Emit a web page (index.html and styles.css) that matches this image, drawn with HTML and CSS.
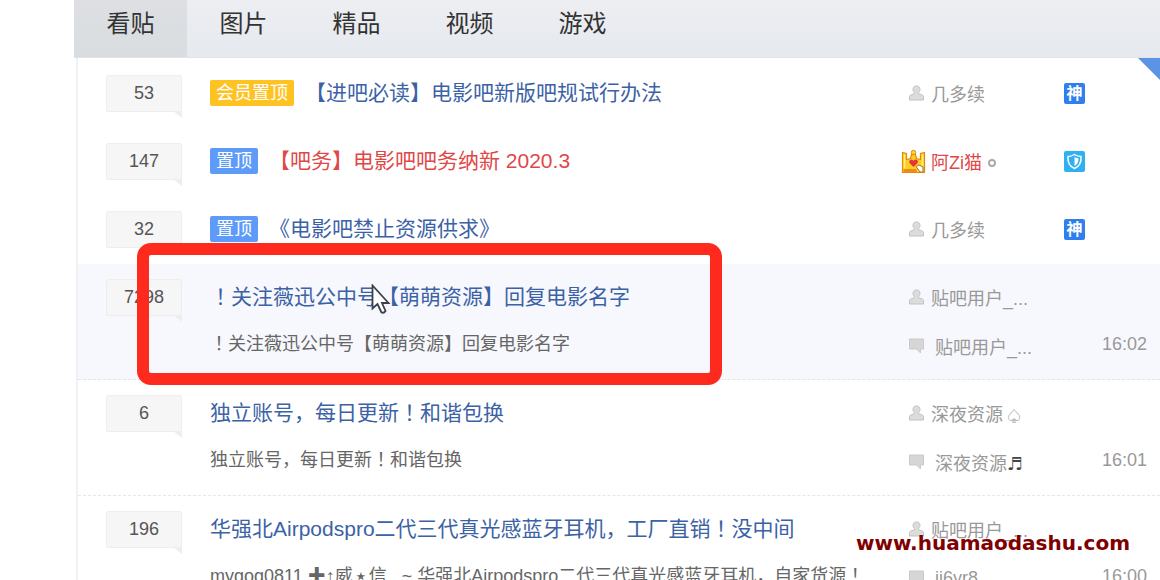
FILE: index.html
```html
<!DOCTYPE html>
<html lang="zh-CN">
<head>
    <meta charset="UTF-8">
    <meta name="viewport" content="width=device-width, initial-scale=1.0">
    <title>电影吧</title>
    <link rel="stylesheet" href="styles.css">
</head>
<body>

    <!-- 图标 -->
    <svg class="sprite" aria-hidden="true">
        <symbol id="icon-user" viewBox="0 0 15 16">
            <path d="M7.500 .8a3.600 3.600 0 0 1 2.200 6.400v1.600l3.900 1.400q.9.400.9 1.300v3.500H.5v-3.500q0-.9.9-1.300l3.900-1.400V7.200A3.600 3.600 0 0 1 7.500.8z" fill="#dcdcdc" stroke="#c2c2c2"/>
        </symbol>
        <symbol id="icon-reply" viewBox="0 0 15 16">
            <path d="M.5 1h14v10h-3v4l-4-4h-7z" fill="#d6d6d6" stroke="#cacaca"/>
        </symbol>
        <symbol id="icon-crown" viewBox="0 0 25 25">
            <path d="M1.500 3.500l4 1v6l4-1 1-4h4l1 4 4 1v-6l4-1v20h-22z" fill="#ffcf1f" stroke="#e08a10" stroke-width="1.200"/>
            <path d="M3.500 5.500v14M21.500 5.500v12" stroke="#fff08a" stroke-width="1.500"/>
            <circle cx="12.500" cy="3.500" r="2.200" fill="#ffd83a" stroke="#e08a10"/>
            <path d="M2.500 21.500h13" stroke="#f08a18" stroke-width="3"/>
            <path d="M12.500 18l-4-4q-1-3 2-3.500 1.500 0 2 1.500 1-2 3-1.300 2.200 1 1 3.300z" fill="#e2353c"/>
            <path d="M15 17.500l3-1.500 4 2v5h-3z" fill="#fff" stroke="#b0702c"/>
        </symbol>
        <symbol id="icon-shield" viewBox="0 0 21 21">
            <rect width="21" height="21" rx="2" fill="#2fb0f2"/>
            <path d="M10.500 3.500q3 2 6.500 2 .8 9-6.500 12-7.300-3-6.500-12 3.500 0 6.500-2z" fill="none" stroke="#fff" stroke-width="1.500"/>
            <path d="M10.500 6q2 1.200 4 1.300.2 5.700-4 7.700z" fill="#fff"/>
        </symbol>
    </svg>

    <div class="page">
        <nav class="tabs">
            <a class="tab active" href="#">看贴</a>
            <a class="tab" href="#">图片</a>
            <a class="tab" href="#">精品</a>
            <a class="tab" href="#">视频</a>
            <a class="tab" href="#">游戏</a>
        </nav>

        <div class="panel">
            <span class="corner"></span>
            <ul class="threads">
                <!-- 置顶贴 -->
                <li class="thread top">
                    <span class="count">53</span>
                    <div class="main">
                        <div class="title"><span class="badge vip">会员置顶</span><a href="#">【进吧必读】电影吧新版吧规试行办法</a></div>
                    </div>
                    <div class="side">
                        <div class="author"><svg class="icon user"><use href="#icon-user"/></svg><a href="#">几多续</a><span class="medal">神</span></div>
                    </div>
                </li>
                <li class="thread top">
                    <span class="count">147</span>
                    <div class="main">
                        <div class="title red"><span class="badge">置顶</span><a href="#">【吧务】电影吧吧务纳新 2020.3</a></div>
                    </div>
                    <div class="side">
                        <div class="author red"><svg class="icon crown"><use href="#icon-crown"/></svg><a href="#">阿Zi猫</a><span class="ring"></span><svg class="shield"><use href="#icon-shield"/></svg></div>
                    </div>
                </li>
                <li class="thread top">
                    <span class="count">32</span>
                    <div class="main">
                        <div class="title"><span class="badge">置顶</span><a href="#">《电影吧禁止资源供求》</a></div>
                    </div>
                    <div class="side">
                        <div class="author"><svg class="icon user"><use href="#icon-user"/></svg><a href="#">几多续</a><span class="medal">神</span></div>
                    </div>
                </li>

                <!-- 普通贴 -->
                <li class="thread hover">
                    <span class="count">7298</span>
                    <div class="main">
                        <div class="title"><a href="#"><span class="bang">！</span>关注薇迅公中号【萌萌资源】回复电影名字</a></div>
                        <p class="text"><span class="bang">！</span>关注薇迅公中号【萌萌资源】回复电影名字</p>
                    </div>
                    <div class="side">
                        <div class="author"><svg class="icon user"><use href="#icon-user"/></svg><a href="#">贴吧用户_...</a></div>
                        <div class="reply"><svg class="icon talk"><use href="#icon-reply"/></svg><a href="#">贴吧用户_...</a><time>16:02</time></div>
                    </div>
                </li>
                <li class="thread">
                    <span class="count">6</span>
                    <div class="main">
                        <div class="title"><a href="#">独立账号，每日更新<span class="bang">！</span>和谐包换</a></div>
                        <p class="text">独立账号，每日更新<span class="bang">！</span>和谐包换</p>
                    </div>
                    <div class="side">
                        <div class="author"><svg class="icon user"><use href="#icon-user"/></svg><a href="#">深夜资源<span class="suit">♤</span></a></div>
                        <div class="reply"><svg class="icon talk"><use href="#icon-reply"/></svg><a href="#">深夜资源<span class="note">♬</span></a><time>16:01</time></div>
                    </div>
                </li>
                <li class="thread">
                    <span class="count">196</span>
                    <div class="main">
                        <div class="title"><a href="#">华强北Airpodspro二代三代真光感蓝牙耳机，工厂直销<span class="bang">！</span>没中间</a></div>
                        <p class="text">mygog0811 ✚↑威<span class="star">⭑</span>信 . ~ 华强北Airpodspro二代三代真光感蓝牙耳机，自家货源<span class="bang">！</span>...</p>
                    </div>
                    <div class="side">
                        <div class="author"><svg class="icon user"><use href="#icon-user"/></svg><a href="#">贴吧用户_...</a></div>
                        <div class="reply"><svg class="icon talk"><use href="#icon-reply"/></svg><a href="#">ji6yr8</a><time>16:00</time></div>
                    </div>
                </li>
            </ul>
        </div>

        <!-- 标注层 -->
        <div class="mark"></div>
        <svg class="cursor" viewBox="0 0 20 32">
            <path d="M1.500 1.500v23l5-4.500 4 8.500q2.500 1 4-1.500l-3.500-8h6.500z" fill="#fff" stroke="#3c4048" stroke-width="1.800"/>
        </svg>
        <div class="watermark">www.huamaodashu.com</div>
    </div>

</body>
</html>
```
FILE: styles.css
```css
* {
    margin: 0;
    padding: 0;
    box-sizing: border-box;
}

body {
    font-family: "Liberation Sans", "Noto Sans CJK SC", sans-serif;
    font-size: 18px;
    background-color: #fff;
    color: #666;
    text-spacing-trim: space-all;
}

a {
    color: inherit;
    text-decoration: none;
}

.sprite {
    display: none;
}

.page {
    position: relative;
    height: 100vh;
    padding-left: 74px;
    overflow: hidden;
}

/* 导航 */
.tabs {
    display: flex;
    height: 58px;
    background: linear-gradient(#eceef2, #e6e9ee);
    border-bottom: 1px solid #e0e4e8;
}

.tab {
    width: 113px;
    line-height: 48px;
    font-size: 24px;
    text-align: center;
    color: #333;
}

.tab.active {
    background: linear-gradient(#dddfe3, #d9dde0);
}

/* 贴子列表 */
.panel {
    position: relative;
    margin-left: 2px;
    padding-top: 2px;
    border-left: 2px solid #eff2f5;
}

.corner {
    position: absolute;
    top: 0;
    right: 0;
    border-top: 22px solid #5b93e6;
    border-left: 22px solid transparent;
}

.threads {
    list-style: none;
}

.thread {
    display: grid;
    grid-template-columns: 76px minmax(0, 1fr) 246px;
    column-gap: 28px;
    height: 116px;
    padding: 15px 13px 0 28px;
    border-bottom: 1px dashed #e6e6e6;
}

.thread.top {
    height: 68px;
    border-bottom: none;
}

.thread.hover {
    background-color: #f7f8fd;
}

.count {
    position: relative;
    height: 37px;
    line-height: 35px;
    text-align: center;
    color: #555;
    background-color: #f6f6f6;
    border: 1px solid #eee;
    border-radius: 2px;
}

/* 气泡尾巴 */
.count::after {
    content: "";
    position: absolute;
    top: 100%;
    right: -1px;
    border-top: 7px solid #eee;
    border-left: 9px solid transparent;
}

.title {
    display: flex;
    align-items: center;
    gap: 11px;
    height: 36px;
    font-size: 21px;
    line-height: 32px;
    color: #3c62a6;
    white-space: nowrap;
}

.title.red,
.author.red {
    color: #e04848;
}

.badge {
    padding: 0 6px;
    line-height: 26px;
    font-size: 18px;
    color: #fff;
    background-color: #5e9bf8;
    border-radius: 2px;
}

.badge.vip {
    background-color: #ffc223;
}

/* 叹号居中 */
.bang {
    font-family: "Noto Sans CJK JP", sans-serif;
    -webkit-locale: "ja";
    line-height: 1;
}

.text {
    margin-top: 15px;
    line-height: 28px;
    white-space: nowrap;
}

.star {
    padding: 0 3px;
}

.author,
.reply {
    display: flex;
    align-items: center;
    height: 36px;
    color: #999;
    white-space: nowrap;
}

.reply {
    height: 28px;
    margin-top: 17px;
}

.icon {
    flex: none;
    width: 15px;
    height: 16px;
    margin: 0 7px 0 8px;
}

.icon.talk {
    margin-right: 11px;
}

.icon.crown {
    width: 25px;
    height: 25px;
    margin: 0 5px 0 0;
}

.medal,
.shield {
    width: 21px;
    height: 21px;
    margin-left: auto;
    margin-right: 62px;
}

.medal {
    line-height: 21px;
    font-size: 16px;
    font-weight: bold;
    text-align: center;
    color: #fff;
    background-color: #2f80ee;
    border-radius: 2px;
}

.ring {
    width: 8px;
    height: 8px;
    margin: 4px 0 0 6px;
    border: 2px solid #aaa;
    border-radius: 50%;
}

.suit {
    margin-left: 4px;
    font-size: 14px;
}

.note {
    font-family: "DejaVu Sans", sans-serif;
    line-height: 1;
    color: #444;
}

time {
    align-self: flex-start;
    margin-left: auto;
    line-height: 24px;
}

/* 标注 */
.mark {
    position: absolute;
    top: 243px;
    left: 137px;
    width: 585px;
    height: 142px;
    border: 12px solid #ff2a1e;
    border-radius: 14px;
}

.cursor {
    position: absolute;
    top: 284px;
    left: 371px;
    width: 20px;
    height: 32px;
}

.watermark {
    position: absolute;
    right: 30px;
    bottom: 23px;
    font-family: "DejaVu Sans", sans-serif;
    font-size: 20px;
    font-weight: bold;
    line-height: 28px;
    color: #800000;
}
```
